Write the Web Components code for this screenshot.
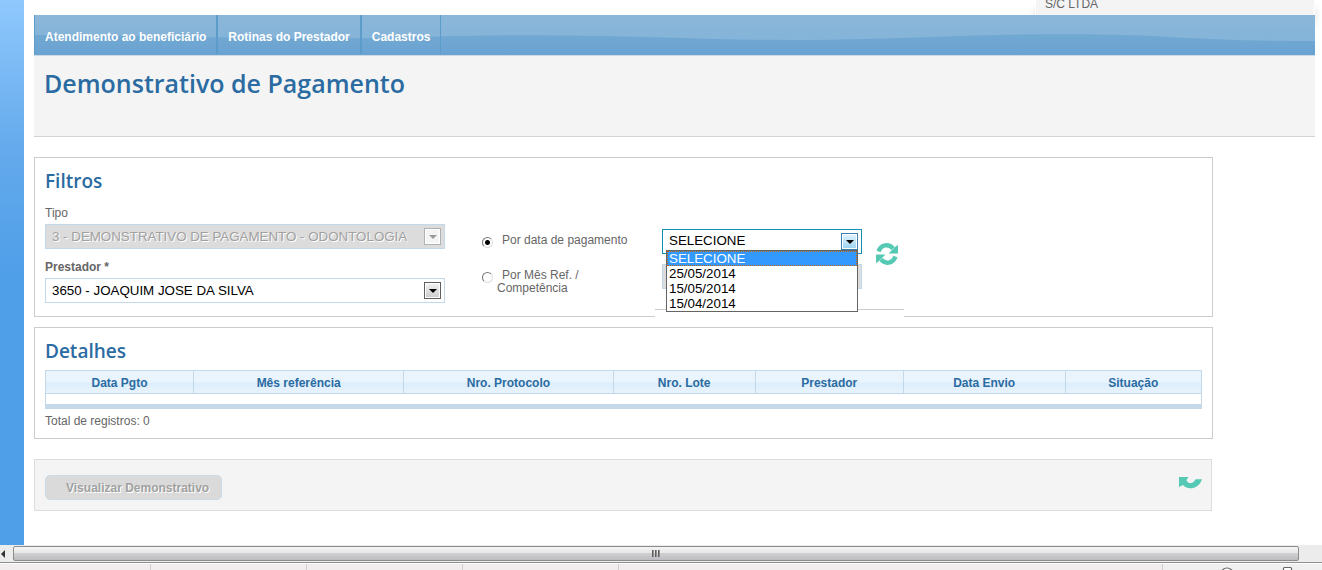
<!DOCTYPE html>
<html lang="pt-BR">
<head>
<meta charset="utf-8">
<title>Demonstrativo de Pagamento</title>
<style>
html, body { margin: 0; height: 100%; }
body {
  --blue: #2a6ba2;
  --line: #c3d9ea;
  --heading: "Open Sans", "Noto Sans", sans-serif;
  font-family: "Liberation Sans", Arial, sans-serif;
  font-size: 12px;
  color: #666;
  background: #fff;
  overflow: hidden;
}
</style>
</head>
<body>
<portal-window>
  <user-box>S/C LTDA</user-box>
  <main-menu>
    <menu-entry>Atendimento ao beneficiário</menu-entry>
    <menu-entry>Rotinas do Prestador</menu-entry>
    <menu-entry>Cadastros</menu-entry>
  </main-menu>
  <page-title>Demonstrativo de Pagamento</page-title>
  <section-panel heading="Filtros"><filter-form></filter-form></section-panel>
  <section-panel heading="Detalhes"><detail-table></detail-table></section-panel>
  <action-bar>Visualizar Demonstrativo</action-bar>
</portal-window>

<script>
function define(name, markup, setup) {
  const template = document.createElement('template');
  template.innerHTML = markup;
  customElements.define(name, class extends HTMLElement {
    constructor() {
      super();
      this.attachShadow({ mode: 'open' }).append(template.content.cloneNode(true));
    }
    connectedCallback() {
      if (setup && !this.ready) setup(this, this.shadowRoot);
      this.ready = true;
    }
  });
}

define('portal-window', `
  <style>
    :host { display: flex; flex-direction: column; height: 100vh; overflow: hidden; }
    .view { flex: 1; min-height: 0; display: flex; overflow: hidden; }
    aside { flex: none; width: 24px; background: linear-gradient(#8fc8fd, #64aaec 150px, #4e9ee8 280px); }
    main { flex: 1; min-width: 0; padding: 0 7px 0 10px; }
  </style>
  <div class="view"><aside></aside><main><slot></slot></main></div>
  <scroll-track></scroll-track>
  <status-strip></status-strip>`);

define('user-box', `
  <style>
    :host { display: flex; justify-content: flex-end; height: 15px; }
    div { box-sizing: border-box; width: 280px; padding: 0 9px; line-height: 9px;
      background: #f4f4f4; border: solid #fff; border-width: 0 1px; box-shadow: 0 8px 8px rgba(0,0,0,.14); }
  </style>
  <div><slot></slot></div>`);

define('main-menu', `
  <style>
    :host { display: block; position: relative; height: 40px; background: linear-gradient(#8ab7d9, #82b2da); }
    svg { position: absolute; inset: 0; width: 100%; height: 100%; }
    nav { position: relative; display: flex; height: 39px; }
  </style>
  <svg viewBox="0 0 1281 40" preserveAspectRatio="none" aria-hidden="true">
    <defs><linearGradient id="w" x1="0" y1="0" x2="0" y2="1"><stop offset="0" stop-color="#72a9d2"/><stop offset="1" stop-color="#6aa2d2"/></linearGradient></defs>
    <path fill="url(#w)" d="M0 20C150 20 250 26 390 22C470 19 560 20 650 23C760 27 830 24 900 22C960 19 1060 18 1120 21C1180 25 1230 26 1281 26V40H0Z"/>
  </svg>
  <nav><slot></slot></nav>`);

define('menu-entry', `
  <style>
    :host { display: block; border: solid #5b9ccb; border-width: 0 1px; }
    a { display: block; padding: 4px 10px 0; line-height: 36px; height: 35px; font-weight: bold; color: #fff; text-decoration: none; }
  </style>
  <a href="#"><slot></slot></a>`);

define('page-title', `
  <style>
    :host { display: block; box-sizing: border-box; height: 82px; padding: 10px 10px 0; margin-bottom: 20px;
      background: #f4f4f4; border: solid #d3d3d3; border-width: 1px 0; border-top-color: #cddae6; }
    h1 { margin: 0; font: 600 25px/34px var(--heading); color: var(--blue); }
  </style>
  <h1><slot></slot></h1>`);

define('section-panel', `
  <style>
    :host { display: block; margin: 0 102px 10px 0; padding: 11px 10px 0; border: 1px solid #ccc; }
    h2 { margin: 0; font: 600 19px/24px var(--heading); color: var(--blue); }
  </style>
  <h2></h2><slot></slot>`,
  (host, root) => { root.querySelector('h2').textContent = host.getAttribute('heading'); });

define('combo-box', `
  <style>
    :host { display: block; }
    label { display: block; line-height: 16px; margin-bottom: 3px; }
    label:empty { display: none; }
    :host([required]) label { font-weight: bold; }
    .box { position: relative; height: 25px; }
    select { font-family: "Liberation Sans", Arial, sans-serif; color: #000; opacity: 1; margin: 0; outline: 0; box-sizing: border-box; border-radius: 0; background: #fff; }
    #s { appearance: none; display: block; width: 100%; height: 100%;
      padding: 0 24px 0 6px; border: 1px solid var(--line); }
    .arrow { position: absolute; top: 4px; right: 4px; bottom: 4px; box-sizing: border-box; width: 17px;
      border: 1px solid #5f5f5f; background: linear-gradient(#f2f2f2, #ccc); box-shadow: inset 0 0 0 1px #fff;
      display: grid; place-items: center; pointer-events: none; }
    .arrow::after { content: ""; border: 4px solid transparent; border-top-color: #000; border-bottom: 0; }
    #s:disabled { background: #dcdcdc; color: #a0a0a0; text-shadow: 1px 1px #fff; }
    #s:disabled + .arrow { border-color: #adb2b5; background: #f4f4f4; }
    #s:disabled + .arrow::after { border-top-color: #999; }
    :host([open]) #s { border-color: #148fb4; padding-bottom: 2px; }
    :host([open]) .arrow { border-color: #3c7fb1; background: linear-gradient(#e5f4fc, #98d1ef); }
    .list { display: none; }
    :host([open]) .list { display: block; position: absolute; z-index: 2; top: 21px; left: 4px; width: calc(100% - 8px); height: 62px;
      padding: 0; border: 1px solid #646464; overflow: hidden; scrollbar-width: none; }
    .list option { box-sizing: border-box; height: 15px; min-height: 15px; padding: 0 2px; line-height: 15px; }
    .list option:checked { background: linear-gradient(#39f, #39f); color: #fff; outline: 1px dotted #c86400; outline-offset: -1px; }
  </style>
  <label for="s"></label>
  <div class="box"><select id="s"></select><span class="arrow"></span></div>`,
  (host, root) => {
    const select = root.querySelector('select');
    root.querySelector('label').textContent = host.getAttribute('label') || '';
    if (host.hasAttribute('name')) select.setAttribute('aria-label', host.getAttribute('name'));
    select.disabled = host.hasAttribute('disabled');
    const options = (host.getAttribute('options') || '').split('|');
    for (const text of options) select.add(new Option(text));
    if (host.hasAttribute('open')) {
      const list = document.createElement('select');
      list.className = 'list';
      list.size = options.length;
      list.setAttribute('aria-label', host.getAttribute('name'));
      for (const text of options) list.add(new Option(text));
      list.selectedIndex = 0;
      root.querySelector('.box').append(list);
    }
  });

define('filter-form', `
  <style>
    :host { display: block; }
    form { display: flex; align-items: flex-start; height: 123px; }
    .fields { width: 400px; padding-top: 12px; display: grid; gap: 10px; }
    .modes { box-sizing: border-box; width: 173px; margin-left: 37px; padding-top: 41px; display: grid; gap: 21px; line-height: 13px; }
    .mode { display: flex; gap: 4px; align-items: flex-start; }
    .mode label { text-indent: 5px; }
    input { appearance: none; flex: none; box-sizing: border-box; width: 11px; height: 11px; margin: 3px 0 0;
      border: 1px solid; border-color: #777 #ddd #ddd #777; border-radius: 50%; background: #fff; }
    input:checked { background: radial-gradient(circle, #000 2px, #fff 3px); }
    .dates { box-sizing: border-box; width: 249px; height: 117px; padding: 36px 6px 20px 7px; position: relative;
      display: flex; gap: 14px; align-items: center; background: #fff; border-bottom: 1px solid #ccc; box-shadow: 0 7px #fff; }
    .lists { flex: 1; display: grid; gap: 10px; }
    button { padding: 0; border: 0; background: none; display: block; margin-bottom: 10px; }
    svg { display: block; }
  </style>
  <form>
    <div class="fields">
      <combo-box label="Tipo" disabled options="3 - DEMONSTRATIVO DE PAGAMENTO - ODONTOLOGIA"></combo-box>
      <combo-box label="Prestador *" required options="3650 - JOAQUIM JOSE DA SILVA"></combo-box>
    </div>
    <div class="modes">
      <div class="mode"><input type="radio" name="m" id="m1" checked><label for="m1">Por data de pagamento</label></div>
      <div class="mode"><input type="radio" name="m" id="m2"><label for="m2">Por Mês Ref. /<br>Competência</label></div>
    </div>
    <div class="dates">
      <div class="lists">
        <combo-box name="Data de pagamento" open options="SELECIONE|25/05/2014|15/05/2014|15/04/2014"></combo-box>
        <combo-box name="Mês de referência" disabled></combo-box>
      </div>
      <button type="button" aria-label="Atualizar">
        <svg width="22" height="24" viewBox="0 0 22 24">
          <g fill="none" stroke="#55c9b4" stroke-width="4.4"><path d="M2.6 9.5C5 2.2 13 1.6 17 6.6"/><path d="M19.4 14.5C17 21.8 9 22.4 5 17.4"/></g>
          <path fill="#55c9b4" d="M22 3V11.5H12.5L15.5 8.5L19.5 4.5ZM0 21V12.5H9.5L6.5 15.5L2.5 19.5Z"/>
        </svg>
      </button>
    </div>
  </form>`);

define('detail-table', `
  <style>
    :host { display: block; padding-bottom: 8px; }
    table { width: 100%; margin-top: 7px; table-layout: fixed; border-collapse: collapse; border: 1px solid var(--line); border-bottom: 5px solid #c5d9e9; }
    th { height: 20px; padding: 2px 0 0; border: 1px solid var(--line); color: var(--blue); font-size: 12px; line-height: 20px;
      background: linear-gradient(#e9f4fd 50%, #dcedfb 50%, #e8f4fe); }
    td { height: 10px; padding: 0; }
    p { margin: 3px 0 0; line-height: 18px; }
  </style>
  <table>
    <colgroup><col style="width:12.8%"><col style="width:18.2%"><col style="width:18.1%"><col style="width:12.3%"><col style="width:12.8%"><col style="width:14%"><col></colgroup>
    <thead><tr><th>Data Pgto</th><th>Mês referência</th><th>Nro. Protocolo</th><th>Nro. Lote</th><th>Prestador</th><th>Data Envio</th><th>Situação</th></tr></thead>
    <tbody><tr><td colspan="7"></td></tr></tbody>
  </table>
  <p>Total de registros: 0</p>`);

define('action-bar', `
  <style>
    :host { display: flex; justify-content: space-between; align-items: flex-start; margin: 20px 103px 0 0; box-sizing: border-box;
      height: 52px; padding: 15px 9px 0 10px; background: #f4f4f4; border: 1px solid #ddd; }
    button { margin: 0; }
    .view { box-sizing: border-box; height: 25px; padding: 0 12px 0 20px; border: 1px solid #c9dbe8; border-radius: 5px; background: #dadada;
      font: bold 12px "Liberation Sans", Arial, sans-serif; color: #a0a0a0; text-shadow: 1px 1px #fff; }
    .back { padding: 0; border: 0; margin-top: 2px; background: none; }
    svg { display: block; }
  </style>
  <button class="view" disabled><slot></slot></button>
  <button class="back" aria-label="Voltar">
    <svg width="23" height="12" viewBox="0 0 23 12"><path fill="#55c9b4" d="M0 0H9.500L7.500 3C8.500 7 14 7.500 16.500 2.200H23C20 11.500 9.500 14 4 8L0 10Z"/></svg>
  </button>`);

define('scroll-track', `
  <style>
    :host { flex: none; display: flex; box-sizing: border-box; height: 18px; padding: 1px 23px 1px 0; background: #ececec; border-bottom: 1px solid #8f8f8f; }
    .left { width: 13px; display: flex; align-items: center; }
    .left::after { content: ""; border: 4px solid transparent; border-right-color: #333; border-left: 0; margin-left: 1px; }
    .thumb { flex: 1; box-sizing: border-box; border: 1px solid #8c8c8f; border-radius: 2px; 
      background: linear-gradient(#f4f4f4, #e8e8e9 45%, #d0d0d2 50%, #bcbcc0); display: flex; justify-content: center; align-items: center; gap: 1px; }
    i { width: 2px; height: 7px; background: linear-gradient(90deg, #444, #aaa); }
  </style>
  <div class="left"></div><div class="thumb"><i></i><i></i><i></i></div>`);

define('status-strip', `
  <style>
    :host { flex: none; display: flex; height: 6px; margin-top: 1px; background: #f1eced; overflow: hidden; }
    span { flex: none; box-sizing: border-box; width: 156px; border-right: 1px solid #d3cdcf; }
    span:first-of-type { width: 151px; }
    .wide { flex: 1; }
    .tools { width: 159px; background: #f0f0f0; border: 0; }
    svg { display: block; }
  </style>
  <span></span><span></span><span></span><span></span><span class="wide"></span>
  <span class="tools"><svg width="159" height="6"><g fill="#fff" stroke="#666" stroke-width="1.2"><circle cx="64" cy="10" r="6"/><rect x="120.500" y="3.500" width="8" height="9" rx="1"/></g></svg></span>`);
</script>
</body>
</html>
